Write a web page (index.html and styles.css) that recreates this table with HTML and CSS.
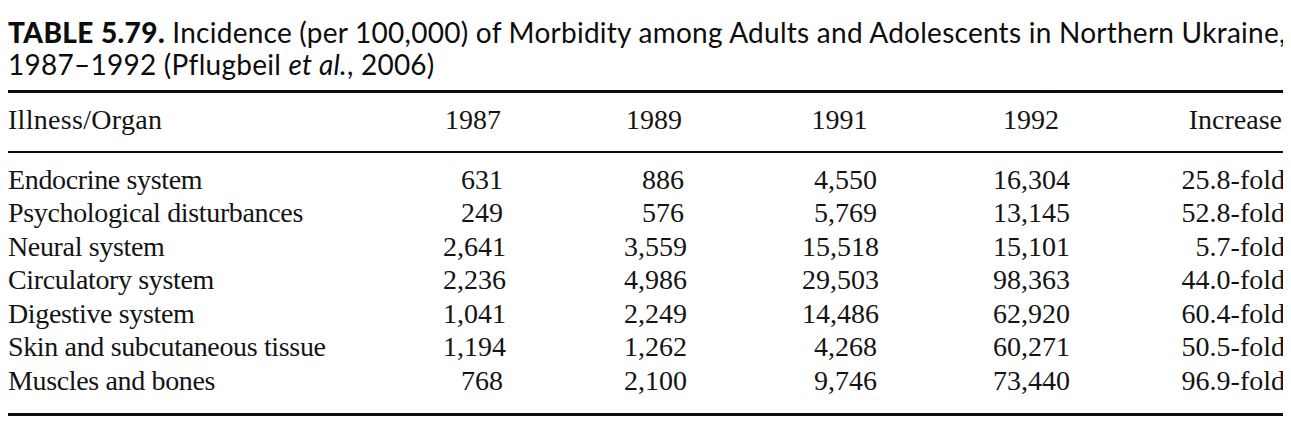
FILE: index.html
```html
<!DOCTYPE html>
<html lang="en">
<head>
<meta charset="utf-8">
<title>Table 5.79</title>
<link rel="stylesheet" href="styles.css">
</head>
<body>
<div class="page">
  <h1 class="caption"><span class="label">TABLE 5.79.</span> Incidence (per 100,000) of Morbidity among Adults and Adolescents in Northern Ukraine,<br>1987–1992 (Pflugbeil <em>et al.</em>, 2006)</h1>
  <table class="data">
    <colgroup>
      <col class="c-name"><col class="c-a"><col class="c-b"><col class="c-c"><col class="c-d"><col class="c-e">
    </colgroup>
    <thead>
      <tr>
        <th class="name">Illness/Organ</th>
        <th class="num n1">1987</th>
        <th class="num n2">1989</th>
        <th class="num n3">1991</th>
        <th class="num n4">1992</th>
        <th class="inc">Increase</th>
      </tr>
    </thead>
    <tbody>
      <tr><td class="name">Endocrine system</td><td class="num n1">631</td><td class="num n2">886</td><td class="num n3">4,550</td><td class="num n4">16,304</td><td class="inc">25.8-fold</td></tr>
      <tr><td class="name">Psychological disturbances</td><td class="num n1">249</td><td class="num n2">576</td><td class="num n3">5,769</td><td class="num n4">13,145</td><td class="inc">52.8-fold</td></tr>
      <tr><td class="name">Neural system</td><td class="num n1">2,641</td><td class="num n2">3,559</td><td class="num n3">15,518</td><td class="num n4">15,101</td><td class="inc">5.7-fold</td></tr>
      <tr><td class="name">Circulatory system</td><td class="num n1">2,236</td><td class="num n2">4,986</td><td class="num n3">29,503</td><td class="num n4">98,363</td><td class="inc">44.0-fold</td></tr>
      <tr><td class="name">Digestive system</td><td class="num n1">1,041</td><td class="num n2">2,249</td><td class="num n3">14,486</td><td class="num n4">62,920</td><td class="inc">60.4-fold</td></tr>
      <tr><td class="name">Skin and subcutaneous tissue</td><td class="num n1">1,194</td><td class="num n2">1,262</td><td class="num n3">4,268</td><td class="num n4">60,271</td><td class="inc">50.5-fold</td></tr>
      <tr><td class="name">Muscles and bones</td><td class="num n1">768</td><td class="num n2">2,100</td><td class="num n3">9,746</td><td class="num n4">73,440</td><td class="inc">96.9-fold</td></tr>
    </tbody>
  </table>
</div>
</body>
</html>
```

FILE: styles.css
```css
html, body {
  background: #ffffff;
}

body {
  margin: 8px;
  color: #0d0d0d;
}

.page {
  width: 1278px;
}

.caption {
  margin: 9px 0 10px 0;
  font-family: "Lato", "Open Sans", sans-serif;
  font-weight: 400;
  font-size: 28px;
  line-height: 31.5px;
  letter-spacing: 0.25px;
  color: #0d0d0d;
  white-space: nowrap;
}

.caption .label {
  font-weight: 900;
  letter-spacing: 0.4px;
}

.caption em {
  font-style: italic;
}

.data {
  width: 1278px;
  table-layout: fixed;
  border-collapse: collapse;
  border-top: 3px solid #0d0d0d;
  border-bottom: 3px solid #0d0d0d;
  font-family: "Liberation Serif", "Times New Roman", serif;
  font-size: 28px;
  line-height: 33.5px;
  color: #141414;
}

.c-name { width: 435px; }
.c-a { width: 60px; }
.c-b { width: 181px; }
.c-c { width: 193px; }
.c-d { width: 192px; }
.c-e { width: 217px; }

.data th,
.data td {
  padding: 0;
  font-weight: 400;
  white-space: nowrap;
}

.data thead th {
  padding-top: 10px;
  padding-bottom: 14px;
  border-bottom: 2px solid #0d0d0d;
}

.data th.name {
  text-align: left;
  letter-spacing: 0.3px;
}

.data td.name {
  text-align: left;
  letter-spacing: -0.35px;
}

.data td.num {
  text-align: right;
}

.data th.num {
  text-align: center;
}

.data .n2 { padding-left: 121px; }
.data .n3 { padding-left: 118px; }
.data .n4 { padding-left: 116px; }

.data .inc {
  text-align: right;
  padding-right: 1px;
}

.data th.inc {
  padding-right: 4px;
}

.data tbody tr:first-child td {
  padding-top: 10px;
}

.data tbody tr:last-child td {
  padding-bottom: 16px;
}
```
